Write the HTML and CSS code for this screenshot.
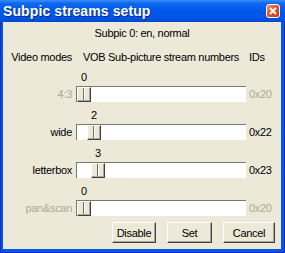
FILE: index.html
```html
<!DOCTYPE html>
<html lang="en">
<head>
    <meta charset="UTF-8">
    <title>Subpic streams setup</title>
    <link rel="stylesheet" href="styles.css">
</head>
<body>
    <div class="window">
        <div class="titlebar">
            <span class="title">Subpic streams setup</span>
            <span class="close">
                <svg width="8" height="8" viewBox="0 0 8 8"><path d="M1 1 L7 7 M7 1 L1 7" stroke="#fff" stroke-width="2"/></svg>
            </span>
        </div>
        <div class="client">
            <p class="status">Subpic 0: en, normal</p>

            <div class="row header">
                <span class="label">Video modes</span>
                <span class="col-title">VOB Sub-picture stream numbers</span>
                <span class="id">IDs</span>
            </div>

            <!-- one row per video mode -->
            <div class="row mode disabled">
                <span class="tick" style="margin-left: 1px">0</span>
                <span class="label">4:3</span>
                <div class="track"><span class="thumb" style="margin-left: 0px"></span></div>
                <span class="id">0x20</span>
            </div>
            <div class="row mode">
                <span class="tick" style="margin-left: 11px">2</span>
                <span class="label">wide</span>
                <div class="track"><span class="thumb" style="margin-left: 10px"></span></div>
                <span class="id">0x22</span>
            </div>
            <div class="row mode">
                <span class="tick" style="margin-left: 15px">3</span>
                <span class="label">letterbox</span>
                <div class="track"><span class="thumb" style="margin-left: 14px"></span></div>
                <span class="id">0x23</span>
            </div>
            <div class="row mode disabled">
                <span class="tick" style="margin-left: 1px">0</span>
                <span class="label">pan&amp;scan</span>
                <div class="track"><span class="thumb" style="margin-left: 0px"></span></div>
                <span class="id">0x20</span>
            </div>

            <div class="buttons">
                <button class="btn btn-disable">Disable</button>
                <button class="btn btn-set">Set</button>
                <button class="btn btn-cancel">Cancel</button>
            </div>
        </div>
    </div>
</body>
</html>
```

FILE: styles.css
```css
* {
    margin: 0;
    padding: 0;
    box-sizing: border-box;
}

body {
    font-family: "Liberation Sans", Arial, sans-serif;
    font-size: 11px;
    letter-spacing: -0.3px;
    color: #000;
    background: #fff;
}

.window {
    width: 285px;
    height: 253px;
    display: flex;
    flex-direction: column;
    background: #0755e6;
    border: 1px solid #0a2fc4;
    border-top: none;
}

.titlebar {
    flex-shrink: 0;
    height: 22px;
    margin: 0 -1px;
    display: flex;
    align-items: center;
    justify-content: space-between;
    padding: 0 5px 0 3px;
    background: linear-gradient(to bottom, #3a8cf7 0%, #1068ef 15%, #0058ea 45%, #0055e5 80%, #0648d3 100%);
}

.title {
    color: #fff;
    font-weight: bold;
    font-size: 14px;
    letter-spacing: 0.1px;
    text-shadow: 1px 1px #0a2a8c;
}

.close {
    width: 14px;
    height: 14px;
    display: flex;
    align-items: center;
    justify-content: center;
    border: 1px solid #fff;
    border-radius: 3px;
    background: linear-gradient(135deg, #f0936e 0%, #e2542a 45%, #c63d12 100%);
}

.client {
    flex: 1;
    min-height: 0;
    margin: 0 3px 3px 2px;
    background: #ece9d8;
    padding: 5px 0 0 6px;
}

.status {
    line-height: 13px;
    text-align: center;
    padding-right: 6px;
    margin-bottom: 11px;
}

.row {
    display: grid;
    grid-template-columns: 67px 170px 1fr;
    line-height: 13px;
    white-space: nowrap;
}

.header {
    margin-bottom: 7px;
}

.header .label {
    padding-right: 4px;
    text-align: right;
}

.col-title {
    text-align: center;
}

.mode {
    grid-template-rows: 13px 16px;
    row-gap: 2px;
    margin-bottom: 7px;
}

.mode .tick {
    grid-column: 2;
    grid-row: 1;
    width: 14px;
    text-align: center;
}

.mode .label {
    grid-column: 1;
    grid-row: 2;
    align-self: center;
    text-align: right;
    padding-right: 4px;
}

.mode .track {
    grid-column: 2;
    grid-row: 2;
    display: flex;
    background: #fff;
    border-top: 1px solid #7a786d;
    border-left: 1px solid #7a786d;
}

.mode .id {
    grid-column: 3;
    grid-row: 2;
    align-self: center;
}

.id {
    padding-left: 3px;
}

.disabled .label,
.disabled .id {
    color: #aca899;
}

.thumb {
    width: 14px;
    height: 15px;
    border: 1px solid;
    border-color: #fff #404040 #404040 #fff;
    box-shadow: inset -1px -1px #aca899;
    background: linear-gradient(to right, transparent 5px, #716f64 5px 6px, #fff 6px 7px, transparent 7px), #ece9d8;
}

.buttons {
    display: flex;
    justify-content: flex-end;
    gap: 11px;
    padding-right: 6px;
    margin-top: -1px;
}

.btn {
    height: 21px;
    font-family: "Liberation Sans", Arial, sans-serif;
    font-size: 11px;
    letter-spacing: -0.3px;
    color: #000;
    background: #ece9d8;
    border: 1px solid;
    border-color: #fff #404040 #404040 #fff;
    box-shadow: inset -1px -1px #aca899;
}

.btn-disable { width: 44px; }
.btn-set { width: 45px; }
.btn-cancel { width: 52px; }
```
